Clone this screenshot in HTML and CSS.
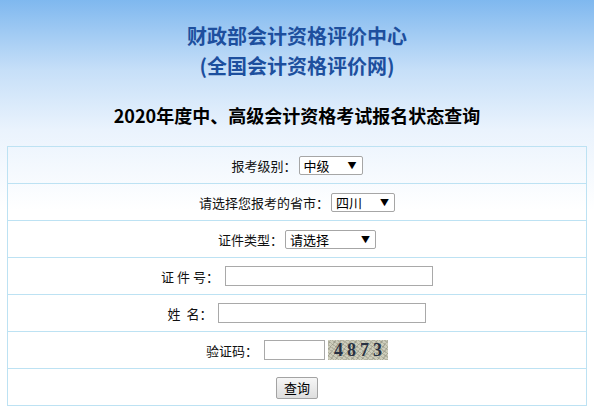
FILE: index.html
```html
<!DOCTYPE html>
<html lang="zh-CN">
<head>
<meta charset="utf-8">
<title>报名状态查询</title>
<link rel="stylesheet" href="styles.css">
</head>
<body>
<div class="header">
  <h1 class="title">财政部会计资格评价中心<br>(全国会计资格评价网)</h1>
  <h2 class="subtitle">2020年度中、高级会计资格考试报名状态查询</h2>
</div>
<div class="form">
  <div class="row">
    <span class="label">报考级别：</span>
    <span class="sel sel-level"><span class="sel-text">中级</span><span class="arrow">▼</span></span>
  </div>
  <div class="row">
    <span class="label">请选择您报考的省市：</span>
    <span class="sel sel-prov"><span class="sel-text">四川</span><span class="arrow">▼</span></span>
  </div>
  <div class="row">
    <span class="label">证件类型：</span>
    <span class="sel sel-type"><span class="sel-text">请选择</span><span class="arrow">▼</span></span>
  </div>
  <div class="row">
    <span class="label spaced">证 件 号：</span>
    <input class="txt txt-wide" type="text">
  </div>
  <div class="row">
    <span class="label spaced">姓&nbsp;&nbsp;名：</span>
    <input class="txt txt-wide" type="text">
  </div>
  <div class="row">
    <span class="label">验证码：</span>
    <input class="txt txt-code" type="text">
    <span class="captcha">4873</span>
  </div>
  <div class="row">
    <button class="btn" type="button">查询</button>
  </div>
</div>
</body>
</html>
```
FILE: styles.css
```css
html, body {
  margin: 0;
  padding: 0;
}
body {
  width: 594px;
  min-height: 419px;
  background: linear-gradient(to bottom, #7fb8ef 0px, #c6dff8 70px, #eaf3fd 130px, #ffffff 210px) no-repeat;
  background-size: 100% 210px;
  background-color: #fff;
  font-family: "Noto Sans CJK SC", "Noto Sans", sans-serif;
  color: #111;
}
.header {
  display: flex;
  flex-direction: column;
  align-items: center;
  padding-top: 21px;
  height: 125px;
}
.title {
  margin: 0;
  font-size: 20px;
  line-height: 30px;
  font-weight: bold;
  color: #1d4f9e;
  text-align: center;
}
.subtitle {
  margin: 23px 0 0;
  font-size: 18px;
  line-height: 22px;
  font-weight: bold;
  color: #000;
  text-align: center;
}
.form {
  width: 580px;
  margin: 0 auto;
  box-sizing: border-box;
  border: 1px solid #bde2f3;
  border-bottom: 0;
}
.row {
  height: 36px;
  border-bottom: 1px solid #bde2f3;
  display: flex;
  align-items: center;
  justify-content: center;
  font-size: 13px;
}
.label {
  color: #111;
  margin-right: 2px;
  white-space: pre;
}
.sel {
  position: relative;
  display: inline-flex;
  align-items: center;
  box-sizing: border-box;
  height: 19px;
  border: 1px solid #a6a6a6;
  border-radius: 2px;
  background: #fff;
  padding-left: 4px;
  font-size: 13px;
  color: #000;
}
.sel-level { width: 64px; }
.sel-prov { width: 64px; }
.sel-type { width: 91px; }
.arrow {
  position: absolute;
  right: 5px;
  top: 3px;
  font-size: 9px;
  line-height: 11px;
  color: #000;
}
.sel-text {
  line-height: 17px;
}
.txt {
  box-sizing: border-box;
  height: 20px;
  border: 1px solid #a9a9a9;
  background: #fff;
  margin: 0 0 0 4px;
  padding: 0;
  outline: none;
}
.txt-wide { width: 208px; }
.txt-code { width: 61px; margin-right: 3px; }
.captcha {
  display: inline-block;
  width: 60px;
  height: 20px;
  line-height: 21px;
  box-sizing: border-box;
  padding-left: 6px;
  font-family: "Liberation Serif", "DejaVu Serif", serif;
  font-size: 18px;
  font-weight: bold;
  letter-spacing: 4px;
  color: #283142;
  background:
    repeating-linear-gradient(35deg, rgba(120,120,100,0.3) 0 1px, transparent 1px 3px),
    repeating-linear-gradient(-50deg, rgba(90,90,80,0.25) 0 1px, transparent 1px 4px),
    #cdcdbb;
}
.btn {
  box-sizing: border-box;
  width: 42px;
  height: 22px;
  padding: 0;
  font-family: "Noto Sans CJK SC", sans-serif;
  font-size: 13px;
  color: #000;
  border: 1px solid #a3a3a3;
  border-radius: 2px;
  background: linear-gradient(#f6f6f6, #dedede);
  margin-top: 1px;
}
```
